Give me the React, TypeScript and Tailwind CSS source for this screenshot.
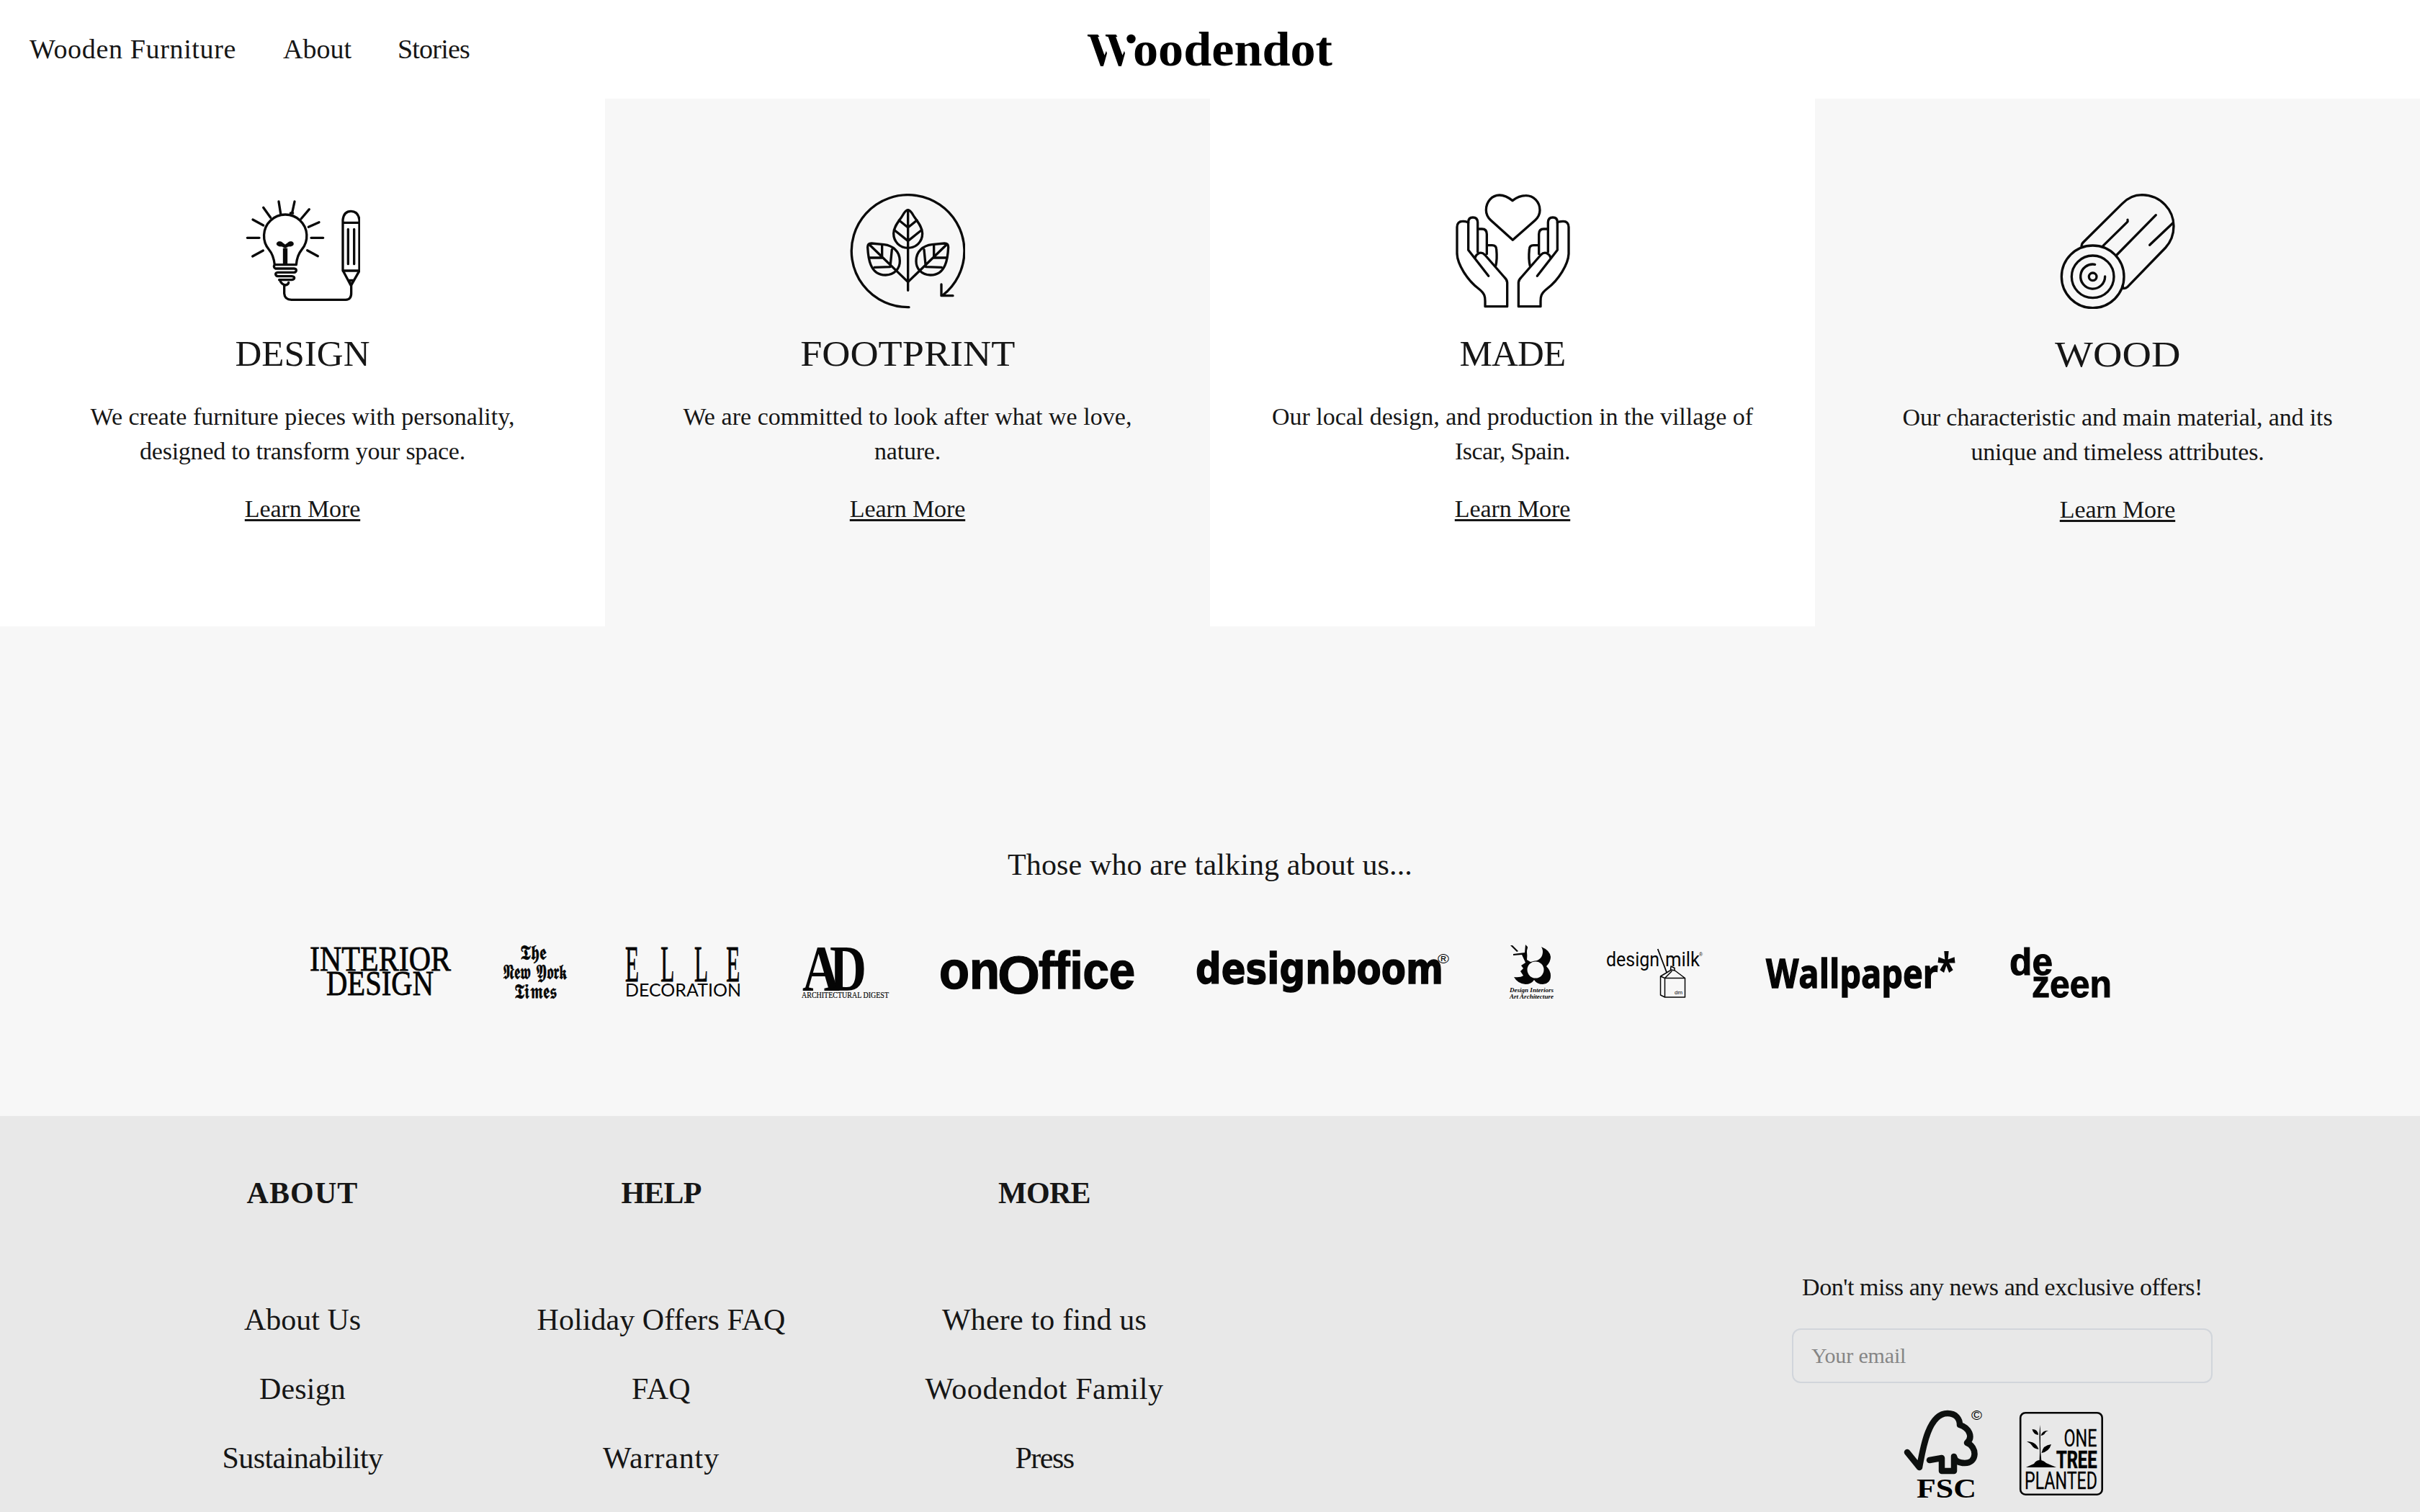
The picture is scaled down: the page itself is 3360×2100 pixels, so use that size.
import type { ReactNode } from "react";

const serif = "font-['Liberation_Serif',serif]";

/* ---------- header ---------- */

function WoodendotLogo() {
  return (
    <svg className="h-[61px] w-[344px] overflow-visible" viewBox="1508 38 344 61" role="img" aria-label="Woodendot">
      <defs>
        <clipPath id="stroke">
          <path d="M1505 44H1520Q1528 50 1534 65L1537 74 1532 92H1526Z" />
        </clipPath>
        <g id="blade" clipPath="url(#stroke)">
          <text x="1509" y="91" fontSize="66" fontWeight="700" className="font-['Liberation_Serif',serif]">W</text>
        </g>
      </defs>
      <use href="#blade" />
      <use href="#blade" x="25" />
      <circle cx="1570.5" cy="54" r="6.2" />
      <text x="1573" y="91" fontSize="67" fontWeight="700" textLength="277" lengthAdjust="spacingAndGlyphs" className="font-['Liberation_Serif',serif]">
        oodendot
      </text>
    </svg>
  );
}

function Header() {
  return (
    <header className="grid h-[137px] grid-cols-[1fr_344px_1fr] items-center bg-white">
      <nav className="flex gap-16 pb-px pl-[41px] text-[38px] leading-[44px]">
        <a className="w-[288px] whitespace-nowrap tracking-[0.65px]">Wooden Furniture</a>
        <a className="w-[95px]">About</a>
        <a className="tracking-[-0.8px]">Stories</a>
      </nav>
      <WoodendotLogo />
    </header>
  );
}

/* ---------- value cards ---------- */

function Icon({ box, children }: { box: string; children: ReactNode }) {
  return (
    <svg className="size-40" viewBox={box} fill="none" stroke="#0a0a0a" strokeWidth="10" strokeLinecap="round" strokeLinejoin="round">
      {children}
    </svg>
  );
}

function DesignIcon() {
  return (
    <Icon box="120 57 480 480">
      <path d="M261 90l8 50M327 90l-10 46M197 115l30 42M388 122l-34 40M153 165l44 24M429 176l-44 20M130 241h50M396 241h50M152 318l44-24M424 317l-44-24" />
      <path d="M310 138h10" />
      <path d="M244 353c-3-26-11-48-23-62A89 89 0 1 1 357 290c-13 16-21 36-23 63z" />
      <path d="M288 352V284" strokeWidth="19" strokeLinecap="butt" />
      <path d="M288 284c-8-2-10-7-16-7-12 0-20-5-20-11 0-6 6-10 13-10 10 0 14 9 23 13 9-4 13-13 23-13 7 0 12 4 12 10 0 7-8 11-19 11-6 0-9 5-16 7z" fill="#0a0a0a" strokeWidth="1" />
      <path d="M244 353q-7 9 3 16h78q10 1 9 8t-9 8h-68q-10 1-9 8t9 8h58q11 1 11 7t-11 8h-52" />
      <path d="M265 416q8 20 24 22 13-2 13-11" />
      <path d="M284 437v36q2 26 30 26h226q24-1 23-30v-28" />
      <path d="M528 378V166q4-36 34-36t35 36v212zM530 178h66" />
      <path d="M550 205v145M575 205v145M530 380l32 60 34-60M551 418h24M556 424l7 14 7-14" />
    </Icon>
  );
}

const leaf = (
  <>
    <path d="M150 264q-16 0-16 16c2 40 8 117 75 116 38-2 60-28 59-59 0-40-30-64-66-68z" />
    <path d="M142 270L302 425M142 324h52v-52M162 364l66-2 7-72" />
  </>
);

function FootprintIcon() {
  return (
    <Icon box="60 57 480 480">
      <path d="M306 530A235 234 0 1 1 447 480M441 435v47h48" />
      <path d="M302 125c-8 0-14 8-22 22-14 24-38 46-38 76 0 34 26 60 60 60s60-26 60-60c0-30-24-52-38-76-8-14-14-22-22-22z" />
      <path d="M302 125v335M265 168l37 30 37-30M247 210l55 44 55-44" />
      {leaf}
      <g transform="matrix(-1 0 0 1 604 0)">{leaf}</g>
    </Icon>
  );
}

const hand = (
  <>
    <path d="M116 178q-6-6-24-6-22 0-23 24v112c2 42 40 107 90 145 26 20 27 34 27 52v22h92V427q-1-12-12-22l-81-93q-14-14-28-5-10 6-12 15" />
    <path d="M116 176v116l84 108M116 176q0-20 19-20t20 20v124M155 204h18q20 0 20 22v82M195 272h20q18 0 18 18 4 40-3 68" />
  </>
);

function MadeIcon() {
  return (
    <Icon box="60 57 480 480">
      <path d="M300 86c-20-16-36-23-54-23-32 0-56 28-56 62 0 18 8 32 20 43l91 82 93-82c12-11 20-26 20-42 0-34-26-62-60-61-20 0-36 7-54 21z" />
      {hand}
      <g transform="matrix(-1 0 0 1 603 0)">{hand}</g>
    </Icon>
  );
}

function WoodIcon() {
  return (
    <Icon box="60 57 480 480">
      <circle cx="197" cy="403" r="130" />
      <circle cx="197" cy="403" r="88" />
      <circle cx="197" cy="403" r="16" />
      <path d="M206 352A51 51 0 1 0 248 402" />
      <path d="M150 275q0-8 6-14L318 100q36-38 84-38c80 2 132 64 132 130 0 40-12 66-34 90L342 445q-8 8-20 6V440" />
      <path d="M240 274l100-98q4-4 2-10M297 312L460 146M434 271l96-91" />
    </Icon>
  );
}

type Card = { icon: ReactNode; title: string; titleClass: string; lines: [string, string][]; bg: string };

const cards: Card[] = [
  {
    icon: <DesignIcon />,
    title: "DESIGN",
    titleClass: "mt-[32px]",
    lines: [
      ["We create furniture pieces with personality,", "tracking-[-0.02px]"],
      ["designed to transform your space.", "tracking-[-0.24px]"],
    ],
    bg: "bg-white",
  },
  {
    icon: <FootprintIcon />,
    title: "FOOTPRINT",
    titleClass: "mt-[32px] scale-x-[1.063]",
    lines: [
      ["We are committed to look after what we love,", "tracking-[0.04px]"],
      ["nature.", "tracking-[-0.2px]"],
    ],
    bg: "bg-[#f7f7f7]",
  },
  {
    icon: <MadeIcon />,
    title: "MADE",
    titleClass: "mt-[32px] tracking-[-0.8px]",
    lines: [
      ["Our local design, and production in the village of", "tracking-[-0.03px]"],
      ["Iscar, Spain.", "tracking-[-0.6px]"],
    ],
    bg: "bg-white",
  },
  {
    icon: <WoodIcon />,
    title: "WOOD",
    titleClass: "mt-[33px] scale-x-[1.1]",
    lines: [
      ["Our characteristic and main material, and its", "tracking-[-0.14px]"],
      ["unique and timeless attributes.", "tracking-[-0.21px]"],
    ],
    bg: "bg-[#f7f7f7]",
  },
];

function Values() {
  return (
    <section className="grid h-[733px] grid-cols-4">
      {cards.map((c) => (
        <article key={c.title} className={`flex flex-col items-center pt-[132px] text-center ${c.bg}`}>
          {c.icon}
          <h2 className={`text-[51px] leading-[60px] ${c.titleClass}`}>{c.title}</h2>
          <p className="mt-[34px] text-[34px] leading-[48px]">
            {c.lines.map(([text, cls]) => (
              <span key={text} className={`block whitespace-nowrap ${cls}`}>{text}</span>
            ))}
          </p>
          <a className="mt-8 text-[34px] leading-[48px] tracking-[-0.1px] underline decoration-[3px] underline-offset-[3px]">Learn More</a>
        </article>
      ))}
    </section>
  );
}

/* ---------- press logos ---------- */

function Logo({ x, w, label, children }: { x: number; w: number; label: string; children: ReactNode }) {
  return (
    <svg className="h-[100px] shrink-0 overflow-visible" width={w} viewBox={`${x} 1300 ${w} 100`} fill="#050505" role="img" aria-label={label}>
      {children}
    </svg>
  );
}

type FitProps = { x: number; y: number; w: number; size: number; font: string; weight?: number; italic?: boolean; stroke?: number; children: string };

/* A line of lettering squeezed or stretched to an exact width. */
function Fit({ x, y, w, size, font, weight = 400, italic, stroke = 0, children }: FitProps) {
  return (
    <text
      x={x}
      y={y}
      fontSize={size}
      fontWeight={weight}
      fontFamily={font}
      fontStyle={italic ? "italic" : "normal"}
      textLength={w}
      lengthAdjust="spacingAndGlyphs"
      stroke="#050505"
      strokeWidth={stroke}
    >
      {children}
    </text>
  );
}

const SERIF = "'Liberation Serif', serif";
const SANS = "'Liberation Sans', sans-serif";

function Press() {
  return (
    <section className="flex h-[680px] flex-col bg-[#f7f7f7] pt-[306px]">
      <h3 className="text-center text-[42px] leading-[50px] tracking-[0.13px]">Those who are talking about us...</h3>
      <div className="mt-[74px] flex gap-[72px] pl-[430px]">
        <Logo x={430} w={196} label="Interior Design">
          <Fit x={430} y={1348} w={196} size={49} font={SERIF} stroke={0.8}>INTERIOR</Fit>
          <Fit x={453} y={1382} w={149} size={48} font={SERIF} stroke={0.8}>DESIGN</Fit>
        </Logo>
        <Logo x={698} w={98} label="The New York Times">
          <Fit x={722} y={1333} w={36} size={29} font="'DejaVu Sans', serif" stroke={0.6}>𝕿𝖍𝖊</Fit>
          <Fit x={698} y={1360} w={90} size={29} font="'DejaVu Sans', serif" stroke={0.6}>𝕹𝖊𝖜 𝖄𝖔𝖗𝖐</Fit>
          <Fit x={714} y={1387} w={59} size={29} font="'DejaVu Sans', serif" stroke={0.6}>𝕿𝖎𝖒𝖊𝖘</Fit>
        </Logo>
        <Logo x={868} w={173} label="Elle Decoration">
          <g transform="translate(868 1363) scale(.44 1)">
            <text x="0 112 218 319" y="0" fontSize="71" fontFamily={SERIF} stroke="#050505" strokeWidth="1">ELLE</text>
          </g>
          <Fit x={868} y={1384} w={161} size={25.5} font="Lato, sans-serif">DECORATION</Fit>
        </Logo>
        <Logo x={1113} w={122} label="Architectural Digest">
          <Fit x={1114} y={1376} w={52} size={91} font={SERIF} weight={700}>A</Fit>
          <Fit x={1152} y={1376} w={51} size={91} font={SERIF} weight={700}>D</Fit>
          <Fit x={1113} y={1386} w={121} size={12.5} font={SERIF} stroke={0.2}>ARCHITECTURAL DIGEST</Fit>
        </Logo>
        <Logo x={1307} w={282} label="onOffice">
          <Fit x={1304} y={1373} w={84} size={74} font={SANS} weight={700} stroke={1.6}>on</Fit>
          <Fit x={1385} y={1380} w={59} size={74} font={SANS} weight={700} stroke={1}>O</Fit>
          <Fit x={1442} y={1373} w={134} size={72} font={SANS} weight={700} stroke={1.6}>ffice</Fit>
        </Logo>
        <Logo x={1661} w={362} label="designboom">
          <Fit x={1660} y={1366} w={344} size={58} font="'DejaVu Sans', sans-serif" weight={700} stroke={1.4}>designboom</Fit>
          <Fit x={1996} y={1338} w={16} size={19} font={SANS}>®</Fit>
        </Logo>
        <Logo x={2095} w={64} label="Design Interiors Art Architecture">
          <path d="M2097 1313l3 0 8 8-2 1z" />
          <path d="M2118 1312l3 3-1 18 5 3q14-2 15-21 12 5 13 14 0 7-6 13 6 6 6 13 0 11-11 12-8 0-12-6-4 6-12 6-11-1-16-10 9 1 13-2l-4-6 4-4-3-4 6-4-5-11-12 1v-2l16-2z" />
          <ellipse cx="2131" cy="1322" rx="11" ry="12.5" fill="#f7f7f7" />
          <ellipse cx="2132" cy="1347" rx="11.5" ry="11.5" fill="#f7f7f7" />
          <Fit x={2096} y={1378} w={61} size={9} font={SERIF} weight={700} italic>Design Interiors</Fit>
          <Fit x={2096} y={1386.5} w={61} size={9} font={SERIF} weight={700} italic>Art Architecture</Fit>
        </Logo>
        <Logo x={2231} w={149} label="design milk">
          <Fit x={2230} y={1341.5} w={74} size={28} font="Roboto, sans-serif">design</Fit>
          <Fit x={2312} y={1341.5} w={48} size={28} font="Roboto, sans-serif">milk</Fit>
          <Fit x={2359} y={1328} w={5} size={7} font={SANS}>®</Fit>
          <path d="M2301.7 1318l12.5 33" fill="none" stroke="#050505" strokeWidth="1.8" />
          <g fill="none" stroke="#050505" strokeWidth="1.5" strokeLinejoin="round">
            <path d="M2311.5 1358.5h28v26.5h-28zM2311.5 1385l-6-3v-26l15-9 5 1 14 10.5M2305.5 1356l6 2.5 10-10M2319.5 1347l.5-5 5 2.5v4" />
          </g>
          <Fit x={2325} y={1381} w={11} size={7.5} font={SANS}>dm</Fit>
        </Logo>
        <Logo x={2452} w={267} label="Wallpaper*">
          <Fit x={2452} y={1372} w={239} size={56} font="'Open Sans', sans-serif" weight={700} stroke={1.4}>Wallpaper</Fit>
          <Fit x={2689} y={1370} w={27} size={64} font="'Open Sans', sans-serif" weight={700}>*</Fit>
        </Logo>
        <Logo x={2791} w={140} label="dezeen">
          <Fit x={2790} y={1353.5} w={60} size={51} font={SANS} weight={700} stroke={1}>de</Fit>
          <Fit x={2821} y={1385} w={111} size={51} font={SANS} weight={700} stroke={1}>zeen</Fit>
        </Logo>
      </div>
    </section>
  );
}

/* ---------- footer ---------- */

const columns: { title: string; titleClass: string; links: [string, string][] }[] = [
  {
    title: "ABOUT",
    titleClass: "tracking-[1.1px]",
    links: [["About Us", "tracking-normal"], ["Design", "tracking-[0.17px]"], ["Sustainability", "tracking-[-0.57px]"]],
  },
  {
    title: "HELP",
    titleClass: "tracking-[-0.8px]",
    links: [["Holiday Offers FAQ", "tracking-[0.07px]"], ["FAQ", "tracking-[0.3px]"], ["Warranty", "tracking-[0.85px]"]],
  },
  {
    title: "MORE",
    titleClass: "tracking-[-0.7px]",
    links: [["Where to find us", "tracking-[0.18px]"], ["Woodendot Family", "tracking-[0.56px]"], ["Press", "tracking-[-1.5px]"]],
  },
];

function FscLogo() {
  return (
    <svg className="h-[136px] w-[124px]" viewBox="2636 1950 124 136" role="img" aria-label="FSC">
      <path
        d="M2648 2017l17 21c5-28 13-75 39-75 12 0 17 8 17 16 13 4 19 17 10 25 14 5 15 28-3 28-8 0-14-3-15-9v20h-17v-18l-17 3"
        fill="none"
        stroke="#0d100f"
        strokeWidth="8.5"
        strokeLinecap="round"
        strokeLinejoin="round"
      />
      <Fit x={2737} y={1972} w={15} size={19} font={SANS}>©</Fit>
      <Fit x={2661} y={2079.5} w={83} size={38} font={SERIF} weight={700}>FSC</Fit>
    </svg>
  );
}

function OneTreeLogo() {
  return (
    <svg className="h-[136px] w-[124px]" viewBox="2800 1950 124 136" role="img" aria-label="One Tree Planted">
      <rect x="2805.2" y="1962.2" width="113.5" height="113.5" rx="7" fill="none" stroke="#050505" strokeWidth="2.6" />
      <path d="M2813 2038q6-3 11-5 3-5 8-5 5 0 9 4 7 3 14 6z" />
      <path d="M2831.5 2030q1-14 .2-26-.6-14 .8-25 1 12 .4 25-.2 12 1.6 26z" />
      <path d="M2821.500 1985q8 0 8.500 8-7-1-8.500-8zM2844 1987q-8-1-10.500 7 5-1 6-4 2-2.500 4.500-3zM2814 2002q13 0 16.500 11-7-1-9-5-3-4-7.500-6zM2848 2006q-3 10-13.500 12 2-11 13.500-12z" />
      <Fit x={2865.5} y={2008.5} w={46} size={34} font="Roboto, sans-serif" stroke={0.3}>ONE</Fit>
      <Fit x={2855} y={2038.5} w={56.5} size={33} font="Roboto, sans-serif" weight={700} stroke={0.7}>TREE</Fit>
      <Fit x={2811} y={2068} w={101} size={33} font="Roboto, sans-serif" stroke={0.3}>PLANTED</Fit>
    </svg>
  );
}

function Footer() {
  return (
    <footer className="flex h-[550px] justify-between overflow-hidden bg-[#e8e8e8] pr-[288px] pl-[190px]">
      <div className="grid grid-cols-[460px_536px_528px] pt-[82px] text-center text-[42px]">
        {columns.map((c) => (
          <div key={c.title}>
            <h4 className={`leading-[50px] font-bold ${c.titleClass}`}>{c.title}</h4>
            <ul className="mt-[127px] flex flex-col gap-12 leading-[48px]">
              {c.links.map(([text, cls]) => (
                <li key={text} className={cls}>{text}</li>
              ))}
            </ul>
          </div>
        ))}
      </div>
      <div className="w-[584px] pt-[214px]">
        <p className="text-center text-[34px] leading-[48px] tracking-[-0.44px]">Don't miss any news and exclusive offers!</p>
        <input
          className="mt-[33px] block h-[76px] w-full rounded-[12px] border-2 border-[#d1d5db] bg-transparent px-[25px] pb-px text-[30px] tracking-[-0.15px] placeholder:text-[#858585]"
          placeholder="Your email"
        />
        <div className="mt-[29px] flex justify-center gap-10">
          <FscLogo />
          <OneTreeLogo />
        </div>
      </div>
    </footer>
  );
}

export default function App() {
  return (
    <div className={`h-[2100px] w-[3360px] overflow-hidden text-[#161616] ${serif}`}>
      <Header />
      <Values />
      <Press />
      <Footer />
    </div>
  );
}
